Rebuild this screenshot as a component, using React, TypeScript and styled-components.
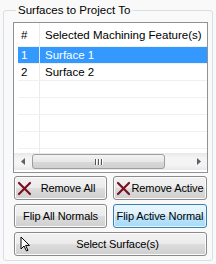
import styled, { createGlobalStyle } from "styled-components";

const GlobalStyle = createGlobalStyle`
  html, body {
    margin: 0;
    padding: 0;
    background: #f9f9f9;
    font-family: "Liberation Sans", Arial, sans-serif;
    font-size: 11.5px;
    color: #000;
  }
`;

const Page = styled.div`
  width: 216px;
  height: 264px;
  padding: 3px 3px 0 3px;
  box-sizing: border-box;
`;

const Group = styled.fieldset`
  margin: 0;
  height: 258px;
  box-sizing: border-box;
  border: 1px solid #d5dfe5;
  border-radius: 3px;
  padding: 5px 4px 3px 9px;
  display: flex;
  flex-direction: column;
`;

const Legend = styled.legend`
  padding: 0 2px;
  margin-left: 3px;
  line-height: 14px;
  font-size: 11.5px;
`;

const List = styled.div`
  height: 151px;
  border: 1px solid #8e9196;
  background: #fff;
  display: flex;
  flex-direction: column;
  box-sizing: border-box;
`;

const Row = styled.div<{ $selected?: boolean; $header?: boolean }>`
  display: grid;
  grid-template-columns: 22px 1fr;
  height: ${({ $header }) => ($header ? "24px" : "17px")};
  flex-shrink: 0;
  margin: 0 0 0 4px;
  background: ${({ $selected }) => ($selected ? "#3399ff" : "transparent")};
  color: ${({ $selected }) => ($selected ? "#fff" : "#000")};
  border-bottom: 1px solid #f0f0f0;
  box-sizing: border-box;
`;

const Cell = styled.div<{ $first?: boolean }>`
  display: flex;
  align-items: center;
  padding-left: ${({ $first }) => ($first ? "3px" : "5px")};
  border-right: ${({ $first }) => ($first ? "1px solid #eaeaea" : "none")};
  white-space: nowrap;
  overflow: hidden;
`;

const Body = styled.div`
  flex: 1;
  overflow: hidden;
  display: flex;
  flex-direction: column;
`;

const Scrollbar = styled.div`
  height: 17px;
  flex-shrink: 0;
  display: flex;
  align-items: stretch;
  margin: 0 0 2px 0;
  background: linear-gradient(to bottom, #e8e8e8, #f4f4f4 30%, #f4f4f4 70%, #e8e8e8);
`;

const ArrowBtn = styled.div`
  width: 17px;
  display: flex;
  align-items: center;
  justify-content: center;
  color: #606060;
`;

const Thumb = styled.div`
  flex: 1;
  margin: 1px 25px 1px 1px;
  border: 1px solid #9e9e9e;
  border-radius: 3px;
  background: linear-gradient(to bottom, #f3f3f3, #e8e8e8 50%, #d9d9d9 51%, #d0d0d0);
  display: flex;
  align-items: center;
  justify-content: center;
`;

const Grip = styled.div`
  display: flex;
  gap: 2px;
  span {
    width: 1px;
    height: 6px;
    background: #555;
    box-shadow: 1px 0 0 #fff;
  }
`;

const ButtonGrid = styled.div`
  display: grid;
  grid-template-columns: 93px 94px;
  gap: 4px 6px;
  margin-top: 3px;
  padding-left: 1px;
`;

const Button = styled.button<{ $hover?: boolean; $wide?: boolean }>`
  grid-column: ${({ $wide }) => ($wide ? "1 / span 2" : "auto")};
  height: 24px;
  padding: 0 2px;
  display: flex;
  align-items: center;
  font-family: inherit;
  font-size: 11px;
  letter-spacing: -0.1px;
  color: #000;
  border-radius: 3px;
  border: 1px solid ${({ $hover }) => ($hover ? "#3c7fb1" : "#8a8a8a")};
  box-shadow: inset 0 0 0 1px ${({ $hover }) => ($hover ? "#e6f4fc" : "#fbfbfb")};
  background: ${({ $hover }) =>
    $hover
      ? "linear-gradient(to bottom, #eaf6fd 0%, #d9f0fc 49%, #bee6fd 50%, #a7d9f5 100%)"
      : "linear-gradient(to bottom, #f2f2f2 0%, #ebebeb 49%, #dddddd 50%, #cfcfcf 100%)"};
`;

const Label = styled.span`
  flex: 1;
  text-align: center;
  white-space: nowrap;
`;

const XIcon = () => (
  <svg width="15" height="15" viewBox="0 0 15 15">
    <path d="M2 2 L13 13 M13 2 L2 13" stroke="#7a1020" strokeWidth="2.2" strokeLinecap="round" />
  </svg>
);

const CursorIcon = () => (
  <svg width="11" height="16" viewBox="0 0 11 16" style={{ marginLeft: 3 }}>
    <path d="M1 1 L1 13 L4 10 L6.5 15 L8 14.3 L5.6 9.4 L9.5 9.4 Z" fill="#fff" stroke="#000" strokeWidth="1" strokeLinejoin="round" />
  </svg>
);

const rows = [
  { n: "1", name: "Surface 1", selected: true },
  { n: "2", name: "Surface 2" },
  { n: "", name: "" },
  { n: "", name: "" },
  { n: "", name: "" },
  { n: "", name: "" },
  { n: "", name: "" },
];

export default function App() {
  return (
    <>
      <GlobalStyle />
      <Page>
        <Group>
          <Legend>Surfaces to Project To</Legend>
          <List>
            <Row $header>
              <Cell $first>#</Cell>
              <Cell>Selected Machining Feature(s)</Cell>
            </Row>
            <Body>
              {rows.map((r, i) => (
                <Row key={i} $selected={r.selected}>
                  <Cell $first>{r.n}</Cell>
                  <Cell>{r.name}</Cell>
                </Row>
              ))}
            </Body>
            <Scrollbar>
              <ArrowBtn>
                <svg width="4" height="7" viewBox="0 0 4 7">
                  <path d="M4 0 L0 3.5 L4 7 Z" fill="currentColor" />
                </svg>
              </ArrowBtn>
              <Thumb>
                <Grip>
                  <span />
                  <span />
                  <span />
                </Grip>
              </Thumb>
              <ArrowBtn>
                <svg width="4" height="7" viewBox="0 0 4 7">
                  <path d="M0 0 L4 3.5 L0 7 Z" fill="currentColor" />
                </svg>
              </ArrowBtn>
            </Scrollbar>
          </List>
          <ButtonGrid>
            <Button>
              <XIcon />
              <Label>Remove All</Label>
            </Button>
            <Button>
              <XIcon />
              <Label>Remove Active</Label>
            </Button>
            <Button>
              <Label>Flip All Normals</Label>
            </Button>
            <Button $hover>
              <Label>Flip Active Normal</Label>
            </Button>
            <Button $wide>
              <CursorIcon />
              <Label>Select Surface(s)</Label>
            </Button>
          </ButtonGrid>
        </Group>
      </Page>
    </>
  );
}
